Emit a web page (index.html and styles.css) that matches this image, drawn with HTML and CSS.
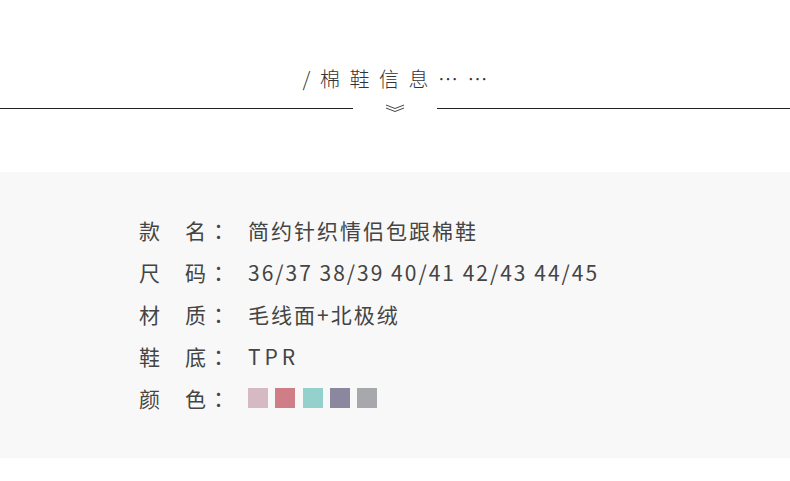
FILE: index.html
```html
<!DOCTYPE html>
<html lang="zh-CN">
<head>
<meta charset="utf-8">
<link rel="stylesheet" href="styles.css">
</head>
<body>
<header class="head">
  <h2 class="title">/棉鞋信息……</h2>
  <div class="divider">
    <span class="line"></span>
    <span class="mid">
      <svg class="chev" width="20" height="9" viewBox="0 0 20 9">
        <polyline points="1,1 10,4.5 19,1" fill="none" stroke="#444" stroke-width="1"/>
        <polyline points="1,4 10,7.5 19,4" fill="none" stroke="#444" stroke-width="1"/>
      </svg>
    </span>
    <span class="line"></span>
  </div>
</header>
<section class="info">
  <div class="row"><span class="label">款　名<span class="colon" lang="zh-TW">：</span></span><span class="value">简约针织情侣包跟棉鞋</span></div>
  <div class="row"><span class="label">尺　码<span class="colon" lang="zh-TW">：</span></span><span class="value">36/37 38/39 40/41 42/43 44/45</span></div>
  <div class="row"><span class="label">材　质<span class="colon" lang="zh-TW">：</span></span><span class="value">毛线面+北极绒</span></div>
  <div class="row"><span class="label">鞋　底<span class="colon" lang="zh-TW">：</span></span><span class="value tpr">TPR</span></div>
  <div class="row"><span class="label">颜　色<span class="colon" lang="zh-TW">：</span></span>
    <span class="swatches">
      <i class="sw c1"></i><i class="sw c2"></i><i class="sw c3"></i><i class="sw c4"></i><i class="sw c5"></i>
    </span>
  </div>
</section>
</body>
</html>
```
FILE: styles.css
```css
html, body {
  margin: 0;
  padding: 0;
  background: #fff;
}
body {
  width: 790px;
  height: 481px;
  overflow: hidden;
  font-family: "Noto Sans CJK SC", "Noto Sans", sans-serif;
  color: #333;
}
.head {
  height: 172px;
  box-sizing: border-box;
  padding-top: 65px;
}
.title {
  margin: 0;
  font-size: 20px;
  line-height: 28px;
  font-weight: 300;
  letter-spacing: 9.5px;
  text-align: center;
  padding-left: 9.5px;
  color: #333;
}
.divider {
  display: flex;
  align-items: center;
  height: 12px;
  margin-top: 9px;
}
.line {
  flex: 1;
  height: 1px;
  background: #222;
}
.mid {
  width: 84px;
  display: flex;
  justify-content: center;
}
.chev {
  display: block;
  margin-top: 1px;
}
.info {
  background: #f8f8f8;
  height: 286px;
  box-sizing: border-box;
  padding: 37px 0 0 139px;
}
.row {
  display: flex;
  align-items: center;
  height: 42px;
  font-size: 21px;
  letter-spacing: 2px;
  font-weight: 400;
  color: #444;
}
.label {
  width: 109px;
  flex: none;
}
.colon {
  font-family: "Noto Sans CJK TC", "Noto Sans CJK JP", sans-serif;
}
.value {
  letter-spacing: 2px;
}
.tpr {
  letter-spacing: 4px;
}
.swatches {
  display: flex;
  gap: 7.25px;
}
.sw {
  display: block;
  width: 20px;
  height: 20px;
}
.c1 { background: #d5bac3; }
.c2 { background: #cf7d86; }
.c3 { background: #94d0cc; }
.c4 { background: #8a879f; }
.c5 { background: #a6a8ac; }
```
